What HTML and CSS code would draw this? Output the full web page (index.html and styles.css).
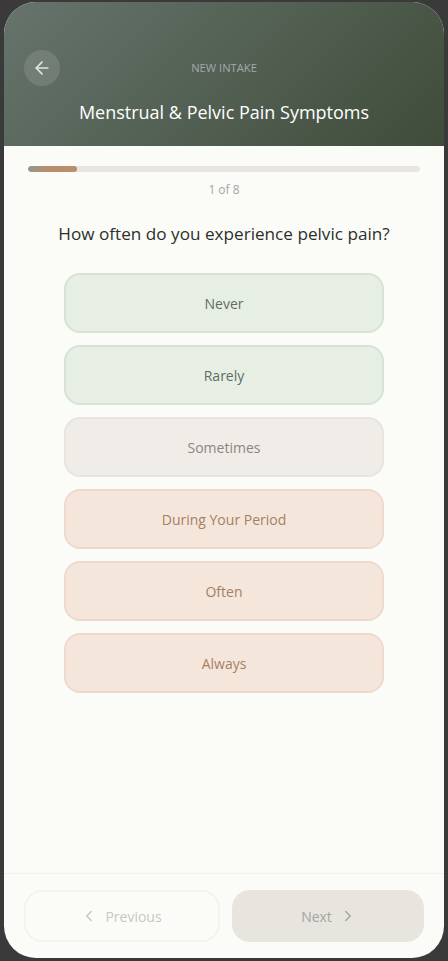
FILE: index.html
```html
<!DOCTYPE html>
<html lang="en">
<head>
    <meta charset="UTF-8">
    <meta name="viewport" content="width=device-width, initial-scale=1.0">
    <title>New Intake</title>
    <link rel="stylesheet" href="styles.css">
</head>
<body>
    <div class="phone">
        <header class="header">
            <div class="header-top">
                <button class="back-button" aria-label="Back">
                    <svg width="20" height="20" viewBox="0 0 24 24" fill="none" stroke="currentColor" stroke-width="2" stroke-linecap="round" stroke-linejoin="round"><path d="M19 12H5"/><path d="M12 19l-7-7 7-7"/></svg>
                </button>
                <div class="eyebrow">NEW INTAKE</div>
            </div>
            <h1 class="title">Menstrual &amp; Pelvic Pain Symptoms</h1>
        </header>

        <main class="content">
            <div class="progress-track"><div class="progress-fill" style="width: 12.5%"></div></div>
            <div class="progress-label">1 of 8</div>

            <h2 class="question">How often do you experience pelvic pain?</h2>

            <div class="options">
                <button class="option option-green">Never</button>
                <button class="option option-green">Rarely</button>
                <button class="option option-neutral">Sometimes</button>
                <button class="option option-peach">During Your Period</button>
                <button class="option option-peach">Often</button>
                <button class="option option-peach">Always</button>
            </div>
        </main>

        <footer class="footer">
            <button class="nav-button nav-prev">
                <svg width="18" height="18" viewBox="0 0 24 24" fill="none" stroke="currentColor" stroke-width="2" stroke-linecap="round" stroke-linejoin="round"><path d="M15 18l-6-6 6-6"/></svg>
                Previous
            </button>
            <button class="nav-button nav-next">
                Next
                <svg width="18" height="18" viewBox="0 0 24 24" fill="none" stroke="currentColor" stroke-width="2" stroke-linecap="round" stroke-linejoin="round"><path d="M9 18l6-6-6-6"/></svg>
            </button>
        </footer>
    </div>
</body>
</html>
```

FILE: styles.css
```css
* {
    box-sizing: border-box;
}

html, body {
    height: 100%;
}

body {
    margin: 0;
    padding: 2px 4px 3px;
    background: #3a3a3a;
    font-family: "Open Sans", "Noto Sans", sans-serif;
}

button {
    font-family: inherit;
}

.phone {
    height: 956px;
    display: flex;
    flex-direction: column;
    background: #fbfcf8;
    border-radius: 32px;
    overflow: hidden;
}

.header {
    height: 144px;
    padding: 48px 20px 0;
    background: linear-gradient(135deg, #66746c 0%, #3f4c3a 100%);
    flex-shrink: 0;
}

.header-top {
    display: grid;
    grid-template-columns: 36px 1fr 36px;
    align-items: center;
    height: 36px;
}

.back-button {
    width: 36px;
    height: 36px;
    padding: 0;
    display: flex;
    align-items: center;
    justify-content: center;
    border: none;
    border-radius: 50%;
    background: rgba(255, 255, 255, 0.12);
    color: #e2e5e0;
}

.eyebrow {
    margin-bottom: 2px;
    text-align: center;
    font-size: 11.2px;
    color: #a3a9ab;
}

.title {
    margin: 14px 0 0;
    text-align: center;
    font-size: 18px;
    font-weight: 400;
    color: #fff;
}

.content {
    flex: 1;
    padding: 20px 24px 0;
}

.progress-track {
    height: 6px;
    border-radius: 3px;
    background: #e8e4de;
    overflow: hidden;
}

.progress-fill {
    height: 100%;
    border-radius: 3px;
    background: linear-gradient(90deg, #8f9690 0%, #b58f70 35%, #bb8e68 100%);
}

.progress-label {
    margin-top: 9px;
    text-align: center;
    font-size: 12px;
    color: #a4a6a2;
}

.question {
    margin: 24px 0 0;
    text-align: center;
    font-size: 17.15px;
    font-weight: 400;
    color: #2b2f2c;
}

.options {
    margin: 28px 36px 0;
    display: flex;
    flex-direction: column;
    gap: 12px;
}

.option {
    height: 60px;
    border-radius: 16px;
    border: 2px solid;
    font-size: 14px;
}

.option-green {
    background: #e7efe5;
    border-color: #d6e2d6;
    color: #5e6c66;
}

.option-neutral {
    background: #f0ece7;
    border-color: #e8e4de;
    color: #8b8680;
}

.option-peach {
    background: #f5e6dc;
    border-color: #efd8cc;
    color: #a67f62;
}

.footer {
    height: 85px;
    padding: 16px 20px 0;
    display: flex;
    gap: 12px;
    border-top: 1px solid #f0f1ec;
}

.nav-button {
    height: 52px;
    display: flex;
    align-items: center;
    justify-content: center;
    gap: 7px;
    border-radius: 18px;
    font-size: 14px;
}

.nav-prev {
    width: 196px;
    padding: 0 8px 0 6px;
    background: transparent;
    border: 2px solid #f3f3ef;
    color: #c6c9c2;
}

.nav-next {
    width: 192px;
    padding: 0 0 0 2px;
    background: #e8e4de;
    border: none;
    color: #a2a6a4;
}
```
